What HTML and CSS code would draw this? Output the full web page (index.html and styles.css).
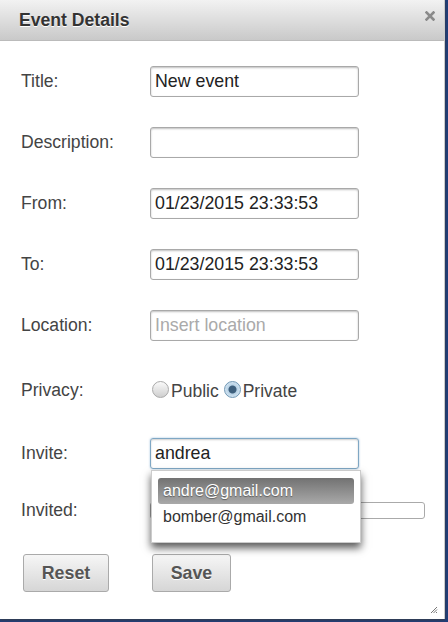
FILE: index.html
```html
<!DOCTYPE html>
<html>
<head>
<meta charset="utf-8">
<link rel="stylesheet" href="styles.css">
</head>
<body>
<div class="dialog">
  <div class="titlebar">
    <span class="title">Event Details</span>
    <svg class="close" width="10" height="10" viewBox="0 0 10 10"><path d="M1.5 1.5 L8.5 8.5 M8.5 1.5 L1.5 8.5" stroke="#8a8a8a" stroke-width="2.6" stroke-linecap="square"/></svg>
  </div>
  <div class="form">
    <div class="row"><label class="lbl">Title:</label><div class="field">New event</div></div>
    <div class="row"><label class="lbl">Description:</label><div class="field"></div></div>
    <div class="row"><label class="lbl">From:</label><div class="field">01/23/2015 23:33:53</div></div>
    <div class="row"><label class="lbl">To:</label><div class="field">01/23/2015 23:33:53</div></div>
    <div class="row"><label class="lbl">Location:</label><div class="field placeholder">Insert location</div></div>
    <div class="row privacy"><label class="lbl">Privacy:</label>
      <div class="radios">
        <span class="radio"></span><span class="rtext">Public</span>
        <span class="radio checked"></span><span class="rtext">Private</span>
      </div>
    </div>
    <div class="row invite"><label class="lbl">Invite:</label>
      <div class="field focus">andrea</div>
      <div class="menu">
        <div class="item active">andre@gmail.com</div>
        <div class="item">bomber@gmail.com</div>
      </div>
    </div>
    <div class="row invited"><label class="lbl">Invited:</label><div class="smallbox"></div></div>
    <div class="buttons">
      <button class="btn reset">Reset</button>
      <button class="btn save">Save</button>
    </div>
  </div>
  <svg class="grip" width="8" height="8" viewBox="0 0 8 8"><path d="M7 1 L1 7 M7 3.5 L3.5 7 M7 6 L6 7" stroke="#777" stroke-width="1"/></svg>
</div>
</body>
</html>
```
FILE: styles.css
```css
html, body {
  margin: 0;
  padding: 0;
}
body {
  width: 448px;
  height: 622px;
  background: #1f3e7c;
  font-family: "Liberation Sans", Arial, sans-serif;
  overflow: hidden;
}
.dialog {
  position: relative;
  width: 445px;
  height: 619px;
  background: #fff;
  box-shadow: 0 1px 3px rgba(60,60,60,0.9);
  border-right: 1px solid #ccc;
  box-sizing: border-box;
}
.titlebar {
  height: 41px;
  background: linear-gradient(#f2f2f2, #c9c9c9);
  display: flex;
  align-items: center;
  justify-content: space-between;
  padding: 0 9px 0 19px;
  box-sizing: border-box;
  border-bottom: 1px solid #bbb;
}
.title {
  font-weight: bold;
  font-size: 17.6px;
  color: #333;
  text-shadow: 0 1px 0 #fff;
  margin-top: 1px;
}
.close {
  align-self: flex-start;
  margin-top: 11px;
}
.form {
  padding: 25px 0 0 21px;
}
.row {
  display: flex;
  align-items: center;
  height: 31px;
  margin-bottom: 30px;
  position: relative;
}
.lbl {
  width: 129px;
  font-size: 17.6px;
  color: #444;
}
.field {
  width: 209px;
  height: 31px;
  box-sizing: border-box;
  border: 1px solid #a9a9a9;
  border-radius: 3px;
  box-shadow: inset 0 1px 2px rgba(0,0,0,0.25);
  font-size: 17.8px;
  color: #222;
  padding: 0 4px;
  line-height: 29px;
}
.placeholder {
  color: #aaa;
}
.focus {
  border-color: #7fa7c4;
  box-shadow: inset 0 1px 2px rgba(0,0,0,0.2), 0 0 2px rgba(80,140,190,0.6);
}
.privacy {
  height: 38px;
  margin-bottom: 29px;
}
.radios {
  display: flex;
  align-items: center;
  font-size: 17.5px;
  color: #444;
  margin-left: 2px;
  margin-top: 2px;
}
.radio {
  width: 17px;
  height: 17px;
  border-radius: 50%;
  box-sizing: border-box;
  border: 1px solid #aaa;
  background: linear-gradient(#fafafa, #cfcfcf);
  margin-right: 2px;
  margin-top: -4px;
}
.radio.checked {
  border-color: #6f97b5;
  background: radial-gradient(circle, #3d5f7d 0 3.5px, #b8d2e6 4.5px, #d9e8f3 8.5px);
  margin-left: 5px;
  margin-right: 2px;
}
.invite {
  margin-bottom: 33px;
}
.menu {
  position: absolute;
  left: 130px;
  top: 32px;
  width: 210px;
  height: 73px;
  box-sizing: border-box;
  background: #fff;
  border: 1px solid #ccc;
  box-shadow: 0 5px 8px rgba(0,0,0,0.65);
  padding: 7px 6px 0 6px;
  z-index: 5;
}
.item {
  height: 26px;
  line-height: 26px;
  font-size: 16px;
  color: #333;
  padding-left: 5px;
  border-radius: 3px;
}
.item.active {
  background: linear-gradient(#727272, #a9a9a9);
  color: #fff;
  text-shadow: 0 1px 1px rgba(0,0,0,0.4);
}
.invited {
  height: 17px;
  margin-bottom: 35px;
}
.smallbox {
  width: 275px;
  height: 17px;
  box-sizing: border-box;
  border: 1px solid #aaa;
  border-radius: 3px;
}
.buttons {
  display: flex;
  gap: 43px;
  padding-left: 2px;
}
.btn {
  height: 38px;
  font-family: "Liberation Sans", Arial, sans-serif;
  font-weight: bold;
  font-size: 17.8px;
  color: #555;
  background: linear-gradient(#f6f6f6, #d6d6d6);
  border: 1px solid #aaa;
  border-radius: 3px;
  padding: 0;
  text-shadow: 0 1px 0 #fff;
}
.reset { width: 86px; }
.save { width: 79px; }
.grip {
  position: absolute;
  right: 6px;
  bottom: 5px;
}
```
